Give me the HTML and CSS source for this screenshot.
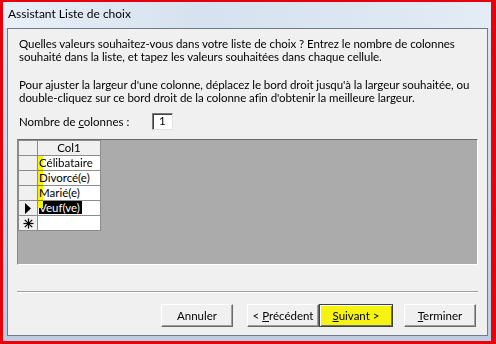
FILE: index.html
```html
<!DOCTYPE html>
<html lang="fr">
<head>
  <meta charset="UTF-8">
  <title>Assistant Liste de choix</title>
  <link rel="stylesheet" href="styles.css">
</head>
<body>

<div class="window">
  <!-- barre de titre -->
  <div class="titlebar">Assistant Liste de choix</div>

  <!-- zone client -->
  <div class="client">
    <p class="intro">
      Quelles valeurs souhaitez-vous dans votre liste de choix ? Entrez le nombre de colonnes<br>
      souhaité dans la liste, et tapez les valeurs souhaitées dans chaque cellule.
    </p>
    <p class="intro">
      Pour ajuster la largeur d'une colonne, déplacez le bord droit jusqu'à la largeur souhaitée, ou<br>
      double-cliquez sur ce bord droit de la colonne afin d'obtenir la meilleure largeur.
    </p>

    <div class="count-row">
      <span>Nombre de <u>c</u>olonnes :</span>
      <span class="count-box">1</span>
    </div>

    <!-- grille de saisie -->
    <div class="grid-area">
      <table class="grid">
        <tr>
          <td class="rowhead"></td>
          <td class="colhead">Col1</td>
        </tr>
        <tr>
          <td class="rowhead"></td>
          <td class="cell"><span class="mark"></span>Célibataire</td>
        </tr>
        <tr>
          <td class="rowhead"></td>
          <td class="cell"><span class="mark"></span>Divorcé(e)</td>
        </tr>
        <tr>
          <td class="rowhead"></td>
          <td class="cell"><span class="mark"></span>Marié(e)</td>
        </tr>
        <tr>
          <td class="rowhead">
            <svg width="8" height="11" viewBox="0 0 8 11"><polygon points="1,0 7,5.5 1,11" fill="#000"/></svg>
          </td>
          <td class="cell"><span class="selected">Veuf(ve)</span><span class="mark short"></span></td>
        </tr>
        <tr>
          <td class="rowhead">
            <svg width="11" height="11" viewBox="0 0 11 11" stroke="#000" stroke-width="1.2">
              <line x1="5.5" y1="0.5" x2="5.5" y2="10.5"/>
              <line x1="0.5" y1="5.5" x2="10.5" y2="5.5"/>
              <line x1="1.8" y1="1.8" x2="9.2" y2="9.2"/>
              <line x1="9.2" y1="1.8" x2="1.8" y2="9.2"/>
            </svg>
          </td>
          <td class="cell"></td>
        </tr>
      </table>
    </div>

    <div class="separator"></div>

    <div class="buttons">
      <button class="btn cancel">Annuler</button>
      <button class="btn">&lt; <u>P</u>récédent</button>
      <button class="btn default"><u>S</u>uivant &gt;</button>
      <button class="btn finish"><u>T</u>erminer</button>
    </div>
  </div>
</div>

</body>
</html>
```

FILE: styles.css
```css
/* === page === */
html, body {
  margin: 0;
  padding: 0;
}

body {
  width: 496px;
  height: 344px;
  overflow: hidden;
  font-family: Lato, "Liberation Sans", sans-serif;
  font-size: 11.5px;
  color: #000;
}

/* === fenêtre (cadre rouge + bord aero) === */
.window {
  box-sizing: border-box;
  width: 496px;
  height: 344px;
  border-style: solid;
  border-color: #e8000b;
  border-width: 2px 5px 3px 3px;
  background: linear-gradient(to bottom, #dfe9f4 0%, #cfdced 40%, #bccde2 100%);
  display: flex;
  flex-direction: column;
}

.titlebar {
  height: 26px;
  line-height: 24px;
  padding-left: 5px;
  font-size: 12px;
  color: #000;
  background: linear-gradient(to right, #e8eff7 0%, #d6e2ef 40%, #dbe6f2 70%, #e4ecf5 100%);
}

/* === zone client === */
.client {
  flex: 1;
  min-height: 0;
  margin: 0 3px 5px 4px;
  border: 1px solid #6f7c8b;
  background: #f0f0f0;
  padding: 8px 9px 0 9px;
  display: flex;
  flex-direction: column;
}

.intro {
  margin: 0 0 0 2px;
  line-height: 13px;
  white-space: nowrap;
  letter-spacing: -0.05px;
}

.intro + .intro {
  margin-top: 15px;
}

.count-row {
  display: flex;
  align-items: center;
  margin: 9px 0 0 2px;
}

.count-row span:first-child {
  width: 133px;
}

.count-box {
  box-sizing: border-box;
  width: 21px;
  height: 17px;
  line-height: 14px;
  padding-left: 6px;
  background: #fff;
  border-top: 1px solid #7a7a7a;
  border-left: 1px solid #7a7a7a;
  border-right: 1px solid #e3e3e3;
  border-bottom: 1px solid #e3e3e3;
  box-shadow: inset 1px 1px 0 #404040;
}

/* === grille === */
.grid-area {
  margin-top: 9px;
  height: 124px;
  flex-shrink: 0;
  background: #ababab;
  border-top: 1px solid #696969;
  border-left: 1px solid #8a8a8a;
  border-right: 1px solid #fff;
  border-bottom: 1px solid #fff;
}

.grid {
  border-collapse: collapse;
}

.grid td {
  height: 14px;
  padding: 0;
  border: 1px solid #8c8c8c;
  line-height: 14px;
  background: #fff;
}

.grid .rowhead {
  width: 18px;
  background: #f0f0f0;
  text-align: center;
  vertical-align: middle;
}

.grid .rowhead svg {
  display: block;
  margin: 0 auto;
}

.grid .colhead {
  width: 62px;
  background: #f0f0f0;
  text-align: center;
}

.grid .cell {
  position: relative;
  padding-left: 1px;
}

/* surlignage jaune ajouté sur la capture */
.mark {
  position: absolute;
  left: 0;
  top: 0;
  width: 5px;
  height: 15px;
  background: #f6f20a;
  mix-blend-mode: multiply;
}

.mark.short {
  height: 7px;
  mix-blend-mode: normal;
}

.selected {
  background: #000;
  color: #fff;
  padding: 0 2px 0 0;
}

/* === pied === */
.separator {
  margin-top: 26px;
  border-top: 1px solid #a0a0a0;
  border-bottom: 1px solid #fff;
}

.buttons {
  display: flex;
  justify-content: flex-end;
  margin-top: 11px;
  padding-right: 2px;
}

.btn {
  box-sizing: border-box;
  width: 72px;
  height: 23px;
  padding: 0;
  font-family: Lato, "Liberation Sans", sans-serif;
  font-size: 11.5px;
  color: #000;
  background: #f0f0f0;
  border-style: solid;
  border-width: 1px;
  border-color: #fff #6a6a6a #6a6a6a #fff;
  box-shadow: inset -1px -1px 0 #a0a0a0;
}

.btn.cancel {
  margin-right: 14px;
}

.btn.finish {
  margin-left: 11px;
}

.btn.default {
  width: 74px;
  background: #f6f212;
  border: 1px solid #404040;
  box-shadow: inset 1px 1px 0 #fff, inset -1px -1px 0 #707070;
}
```
